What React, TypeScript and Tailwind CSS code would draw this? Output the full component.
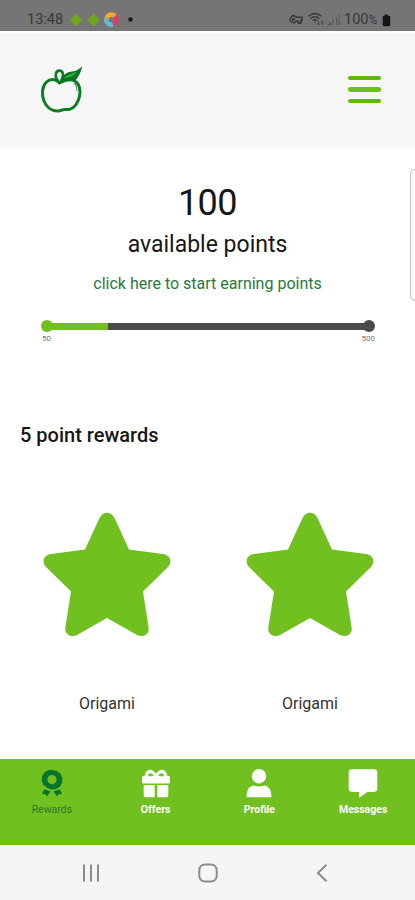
interface TabItem {
  label: string;
  icon: React.ReactNode;
  active?: boolean;
}

const rewards = [
  { id: 1, name: 'Origami' },
  { id: 2, name: 'Origami' },
];

function StatusBar() {
  return (
    <div className="flex h-[31px] items-center justify-between bg-[#757575] pt-[9px] pr-[24px] pl-[27px] text-[#383838]">
      <div className="flex items-center">
        <span className="w-[42px] text-[14.5px] leading-none">13:48</span>
        <svg width="68" height="16" viewBox="0 0 68 16">
          <path d="M7 1.5 13 8 7 14.5 1 8Z" fill="#71a51c" />
          <path d="M24.5 1.5 30.5 8l-6 6.5-6-6.5Z" fill="#71a51c" />
          <g fill="none" strokeWidth="4.6">
            <path d="M37.6 6.2A5 5 0 0 1 46 4.2" stroke="#f2aa2c" />
            <path d="M46 4.2A5 5 0 0 1 43.8 12.5" stroke="#dc3c69" />
            <path d="M43.8 12.5A5 5 0 0 1 37.6 6.2" stroke="#66b9d1" />
          </g>
          <circle cx="61.5" cy="7.5" r="2.2" fill="#191919" />
        </svg>
      </div>
      <div className="flex items-center">
        <svg width="56" height="16" viewBox="0 0 56 16" fill="none" stroke="#383838" strokeWidth="1.5">
          <path d="M8.2 5.2H14v3.3h-1.2v2.8h-2.5V9.3H8.2a3.4 3.4 0 1 1 0-4.1Z" />
          <circle cx="5.3" cy="7.5" r=".8" />
          <path d="M20.5 4.3c4-3.4 9-3.4 13 0M22.5 6.5c3-2.3 6-2.3 9 0M24.5 8.5c1.8-1.2 3.2-1.2 5 0" strokeWidth="1.3" />
          <path d="M27 7.5v3.2M30.5 9v4M29 11.5l1.5 1.5 1.5-1.5M34.5 13V9M33 10.5 34.5 9l1.5 1.5" strokeWidth=".7" />
          <path d="M40 13h2.5v-2.5ZM45 13V8M48.5 13V5.5M51 13V2.5" stroke="#535353" strokeWidth="1" />
        </svg>
        <span className="mr-[1px] w-[37px] text-[14.5px] leading-none whitespace-nowrap">
          100<span className="text-[12px]">%</span>
        </span>
        <svg width="9" height="13" viewBox="0 0 9 13" fill="#161616">
          <path d="M2.7.5h3v1.2h1.2q1.3 0 1.3 1.3v8q0 1.3-1.3 1.3H2Q.7 12.3.7 11V3Q.7 1.7 2 1.7h.7Z" />
        </svg>
      </div>
    </div>
  );
}

function AppleLogo() {
  return (
    <svg width="44" height="50" viewBox="0 0 44 50" fill="none">
      <path
        d="M18.5 17C15 13.5 10 13.8 6.500 17C1.800 21.500 1.500 29.500 4 36C6.500 42.500 12 46.300 18 46C21 45.900 22.500 44.300 25 44.500C29 45 33 44 36 39.500C41 32 41.800 21.500 35.500 16.500C31 13.500 25 15 19.500 18"
        stroke="#0b7d22"
        strokeWidth="3"
        strokeLinecap="round"
      />
      <path
        d="M18.500 17C14.500 13 15 6.200 19 5.700C24 5.200 24 12 20.500 17"
        stroke="#0b7d22"
        strokeWidth="2.700"
      />
      <path d="M21 16C23 8.500 28 6.600 34 6.200C37.500 5.700 40 3.500 42.300 1C41 7 38.500 12 35.500 15.500C30 13.500 26 14 21 16Z" fill="#087522" />
      <path d="M24 13.500C28 9 32 9 37 6.500C35 10 32.500 12 24 13.500Z" fill="#35ac32" />
      <path d="M34 18C36.500 20 37 23 37 26" stroke="#68956b" strokeWidth="1.200" />
    </svg>
  );
}

function Header() {
  return (
    <header className="mt-[2px] flex h-[115px] items-center justify-between bg-[#f6f6f6] pr-[34px] pb-[2px] pl-[40px]">
      <AppleLogo />
      <button aria-label="Menu" className="flex flex-col gap-[7px]">
        <span className="h-[4.500px] w-[33px] rounded-full bg-[#60b80b]" />
        <span className="h-[4.500px] w-[33px] rounded-full bg-[#70bf20]" />
        <span className="h-[4.500px] w-[33px] rounded-full bg-[#60b80b]" />
      </button>
    </header>
  );
}

function PointsSummary() {
  return (
    <section className="flex flex-col items-center pt-[34px]">
      <p className="text-[36px] leading-[42px] tracking-[-0.5px] text-[#161616]">100</p>
      <p className="mt-[7px] text-[23px] leading-[28px] text-[#161616]">available points</p>
      <a className="mt-[15px] text-[16px] leading-[20px] text-[#267a3e]">click here to start earning points</a>
      <div className="mt-[26px] flex w-[334px] items-center">
        <span className="size-3 rounded-full bg-[#70c01f]" />
        <span className="-ml-1 h-[7px] w-[59px] bg-[#70c01f]" />
        <span className="h-[7px] flex-1 bg-[#4b4b4b]" />
        <span className="-ml-1 size-3 rounded-full bg-[#4b4b4b]" />
      </div>
      <div className="mt-[2px] flex w-[335px] justify-between pl-[2px] text-[8px] leading-[9px] text-[#777]">
        <span>50</span>
        <span>500</span>
      </div>
    </section>
  );
}

function Star() {
  return (
    <svg width="130" height="130" viewBox="0 0 130 130" fill="#70c01f">
      <path d="M43 40.500 57.500 9C61 2 69 2 72.500 9L87 40.500 121 45C128.500 46 130.500 53 126 58L101 82.500 106.700 119C107.500 125.500 101 129 95 126L65 109 35 126C29 129 22.500 125.500 23.300 119L29 82.500 4 58C-.500 53 1.500 46 9 45Z" />
    </svg>
  );
}

function RewardIcon() {
  return (
    <svg width="30" height="30" viewBox="0 0 30 30" fill="#08752a">
      <path
        fillRule="evenodd"
        d="M15 .8 17.300 1.600 19.700 1.800 21.500 3.400 23.600 4.500 24.300 6.800 25.500 8.900 25.200 11.200 25.500 13.600 24 15.500 23.100 17.700 20.900 18.700 19 20.200 16.600 20.200 14.300 20.700 12.200 19.600 9.900 19 8.300 17.200 6.300 15.900 5.600 13.600 4.600 11.500 5 9.100 5 6.700 6.600 5 7.800 3 10 2.100 12 .9ZM15 6a4.600 4.600 0 1 0 0 9.200A4.600 4.600 0 0 0 15 6Z"
      />
      <path d="M7 20.500 13.500 22.300 10 27.500 8.500 25.300 5 25ZM23 20.500 16.500 22.300 20 27.500 21.500 25.300 25 25Z" />
    </svg>
  );
}

function GiftIcon() {
  return (
    <svg width="30" height="30" viewBox="0 0 30 30" fill="#fff">
      <path
        fillRule="evenodd"
        d="M4 6.700C3.800 2.500 8-.500 11.800 1.500L15 4.400l3.200-2.900C22-.500 26.200 2.500 26 6.700h1q2 0 2 2v4.700q0 1-1 1H2q-1 0-1-1V8.700q0-2 2-2ZM12.800 6.700c-1.300-3.200-5.200-3.400-5.600-.5q0 1 1 1.200M17.200 6.700c1.300-3.200 5.200-3.400 5.600-.5q0 1-1 1.200"
      />
      <path d="M2.700 16h11v12.300h-9q-2 0-2-2ZM16.300 16h11v10.300q0 2-2 2h-9Z" />
    </svg>
  );
}

function ProfileIcon() {
  return (
    <svg width="30" height="30" viewBox="0 0 30 30" fill="#fff">
      <circle cx="15" cy="7.200" r="7.200" />
      <path d="M2.700 28.300V25Q3.500 17 10 16.500q5 2 10 0 6.500.5 7.300 8.500v3.300Z" />
    </svg>
  );
}

function MessageIcon() {
  return (
    <svg width="30" height="30" viewBox="0 0 30 30" fill="#fff">
      <path d="M4 .3h22q3.300 0 3.300 3.300v16q0 3.300-3.300 3.300h-6.500L12 28.300q-1 .6-1-.6v-4.800H4q-3.300 0-3.300-3.300v-16Q.7.3 4 .3Z" />
    </svg>
  );
}

const tabs: TabItem[] = [
  { label: 'Rewards', icon: <RewardIcon />, active: true },
  { label: 'Offers', icon: <GiftIcon /> },
  { label: 'Profile', icon: <ProfileIcon /> },
  { label: 'Messages', icon: <MessageIcon /> },
];

function TabBar() {
  return (
    <nav className="grid h-[86px] grid-cols-4 bg-[#70c01f] pt-[10px]">
      {tabs.map((tab) => (
        <div key={tab.label} className="flex flex-col items-center">
          {tab.icon}
          <span
            className={`mt-[4px] text-[10.500px] leading-[14px] ${
              tab.active ? 'text-[#2c7822]' : 'font-bold text-white'
            }`}
          >
            {tab.label}
          </span>
        </div>
      ))}
    </nav>
  );
}

function SystemBar() {
  return (
    <div className="flex h-[55px] justify-between bg-[#f5f5f5] px-[81px] pt-[18px]">
      <svg width="20" height="20" viewBox="0 0 20 20" stroke="#8b8b8b" strokeWidth="2">
        <path d="M3 1.500v17M10 1.500v17M17 1.500v17" />
      </svg>
      <svg width="20" height="20" viewBox="0 0 20 20" fill="none" stroke="#8b8b8b" strokeWidth="2">
        <rect x="1.300" y="1.500" width="17.400" height="17" rx="5.500" />
      </svg>
      <svg width="20" height="20" viewBox="0 0 20 20" fill="none" stroke="#8b8b8b" strokeWidth="2">
        <path d="M12.500 1.800 4 10l8.500 8.200" />
      </svg>
    </div>
  );
}

export default function App() {
  return (
    <div className="flex h-[900px] w-[415px] flex-col overflow-hidden bg-white font-['Roboto',sans-serif]">
      <StatusBar />
      <Header />
      <main className="relative flex-1">
        <PointsSummary />
        {/* edge panel handle */}
        <div className="absolute top-[21px] right-[-4px] h-[132px] w-[9px] rounded-l-[5px] border border-[#bcbcbc] bg-[#fafafa]" />
        <h2 className="mt-[79px] pl-[20px] text-[20px] leading-[26px] font-medium text-[#161616]">5 point rewards</h2>
        <div className="mt-[61px] grid grid-cols-2 gap-x-[73px] pr-[40px] pl-[42px]">
          {rewards.map((reward) => (
            <div key={reward.id} className="flex flex-col items-center">
              <Star />
              <p className="mt-[55px] text-[16px] leading-[20px] text-[#333]">{reward.name}</p>
            </div>
          ))}
        </div>
      </main>
      <TabBar />
      <SystemBar />
    </div>
  );
}
